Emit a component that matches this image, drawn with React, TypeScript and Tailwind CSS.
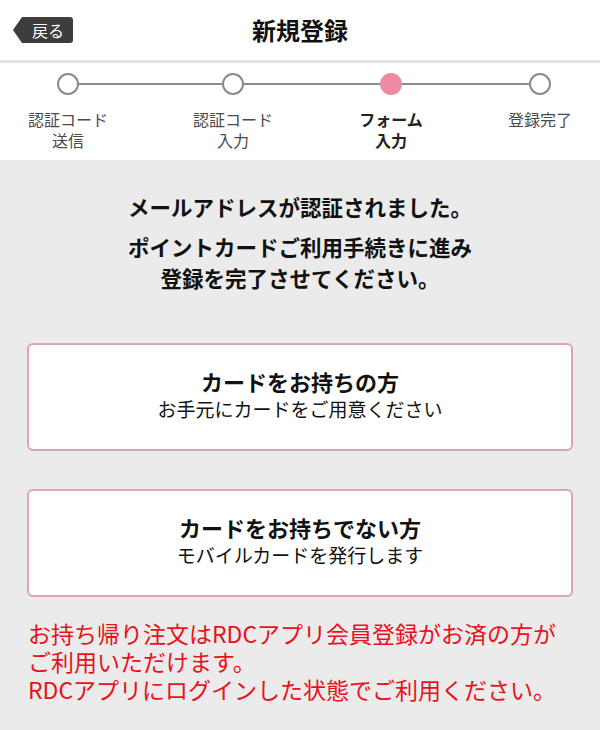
import React from 'react'

const steps = [
  { label: ['認証コード', '送信'], active: false },
  { label: ['認証コード', '入力'], active: false },
  { label: ['フォーム', '入力'], active: true },
  { label: ['登録完了'], active: false },
]

function Circle({ active }: { active: boolean }) {
  return active ? (
    <div className="w-[22px] h-[22px] rounded-full bg-[#ef8ba1] shrink-0" />
  ) : (
    <div className="w-[22px] h-[22px] rounded-full border-2 border-[#8a8a8a] bg-white shrink-0" />
  )
}

export default function App() {
  return (
    <div className="w-[600px] h-[730px] bg-[#ebebeb] text-[#111] font-['Noto_Sans_CJK_JP',sans-serif] overflow-hidden">
      {/* header */}
      <div className="h-[60px] bg-white grid grid-cols-[1fr_auto_1fr] items-center">
        <div className="pl-[13px]">
          <button className="h-[26px] w-[60px] pl-[10px] bg-[#3d3d3d] text-white text-[16px] leading-[26px] rounded-r-[3px] [clip-path:polygon(9px_0,100%_0,100%_100%,9px_100%,0_50%)] flex items-center justify-center">
            戻る
          </button>
        </div>
        <h1 className="text-[24px] font-bold leading-none">新規登録</h1>
        <div />
      </div>
      <div className="h-[3px] bg-[#e2e2e2]" />

      {/* stepper */}
      <div className="h-[97px] bg-white pt-[10px]">
        <div className="flex items-center pl-[57px]">
          <Circle active={steps[0].active} />
          <div className="w-[143px] h-[2px] bg-[#8a8a8a]" />
          <Circle active={steps[1].active} />
          <div className="w-[136px] h-[2px] bg-[#8a8a8a]" />
          <Circle active={steps[2].active} />
          <div className="w-[127px] h-[2px] bg-[#8a8a8a]" />
          <Circle active={steps[3].active} />
        </div>
        <div className="flex pl-[8px] mt-[14px]">
          {steps.map((s, i) => (
            <div
              key={i}
              className={`w-[120px] text-center text-[16px] leading-[21px] ${
                i === 1 ? 'ml-[45px]' : i === 2 ? 'ml-[38px]' : i === 3 ? 'ml-[29px]' : ''
              } ${s.active ? 'font-bold text-[#222]' : 'text-[#4a4a4a]'}`}
            >
              {s.label.map((l) => (
                <div key={l}>{l}</div>
              ))}
            </div>
          ))}
        </div>
      </div>

      {/* message */}
      <div className="pt-[31px] text-center font-bold text-[21.5px] leading-[31px]">
        <p>メールアドレスが認証されました。</p>
        <p className="mt-[9px]">
          ポイントカードご利用手続きに進み
          <br />
          登録を完了させてください。
        </p>
      </div>

      {/* options */}
      <div className="px-[27px] mt-[50px] flex flex-col gap-[38px]">
        <button className="h-[108px] bg-white border-2 border-[#dfa3b1] rounded-[6px] flex flex-col items-center justify-center pb-[4px]">
          <span className="text-[22px] font-bold leading-[28px]">カードをお持ちの方</span>
          <span className="text-[19px] leading-[28px]">お手元にカードをご用意ください</span>
        </button>
        <button className="h-[108px] bg-white border-2 border-[#dfa3b1] rounded-[6px] flex flex-col items-center justify-center pb-[4px]">
          <span className="text-[22px] font-bold leading-[28px]">カードをお持ちでない方</span>
          <span className="text-[19px] leading-[28px]">モバイルカードを発行します</span>
        </button>
      </div>

      <p className="px-[28px] mt-[22px] text-[23px] leading-[28px] text-[#e8121c]">
        お持ち帰り注文はRDCアプリ会員登録がお済の方が
        <br />
        ご利用いただけます。
        <br />
        RDCアプリにログインした状態でご利用ください。
      </p>
    </div>
  )
}
